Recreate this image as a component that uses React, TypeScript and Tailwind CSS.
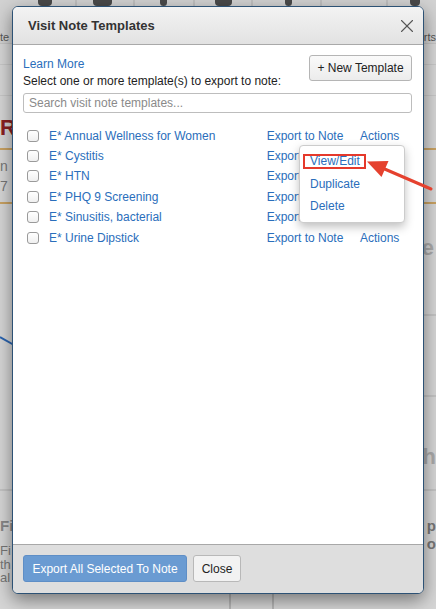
import { X } from 'lucide-react';

const templates = [
  'E* Annual Wellness for Women',
  'E* Cystitis',
  'E* HTN',
  'E* PHQ 9 Screening',
  'E* Sinusitis, bacterial',
  'E* Urine Dipstick',
];

// toolbar tabs behind the modal: cell width, icon offset, icon width
const tabs = [
  { w: 77, x: 38, iw: 14 },
  { w: 58, x: 16, iw: 19 },
  { w: 60, x: 25, iw: 7 },
  { w: 58, x: 20, iw: 17 },
  { w: 69, x: 32, iw: 7 },
  { w: 66, x: 0, iw: 0 },
  { w: 48, x: 22, iw: 10 },
];

function Backdrop() {
  return (
    <div className="flex flex-col h-full text-[#777]">
      {/* toolbar */}
      <div className="h-[44px] flex bg-[#d2d2d2] border-b border-[#c4c4c4]">
        {tabs.map((t, i) => (
          <div key={i} style={{ width: t.w }} className="flex flex-col border-r-2 border-[#c0c0c0] last:border-r-0">
            {t.iw > 0 && (
              <div
                style={{ marginLeft: t.x, width: t.iw }}
                className="h-[14px] -mt-[8px] rounded-[4px] bg-[#4a4a4a]"
              />
            )}
          </div>
        ))}
      </div>
      <div className="-mt-[13px] h-[12px] flex justify-between items-end text-[11px] leading-[12px] text-[#555]">
        <span>te</span>
        <span>rts</span>
      </div>
      <div className="h-[22px] border-b border-[#c8c8c8]" />
      <div className="h-[31px] border-b border-[#c8c8c8]" />
      <div className="h-[20px]" />
      <div className="h-[24px] flex items-center">
        <span className="text-[22px] font-bold text-[#8a2020] leading-none">R</span>
      </div>
      <div className="h-[10px] border-b-2 border-[#c9a263]" />
      <div className="h-[54px] flex flex-col justify-center text-[14px] leading-[20px] text-[#777] border-b-2 border-[#c9a263]">
        <span>n</span>
        <span>7</span>
      </div>
      <div className="h-[84px] flex justify-end items-start pt-[33px]">
        <span className="text-[22px] font-bold text-[#aaa] leading-none pr-[2px]">e</span>
      </div>
      <div className="h-[26px]" />
      <div className="h-[2px] bg-[#c4c4c4] w-[14px] self-end" />
      <div className="h-[79px]" />
      <div className="h-[2px] bg-[#c4c4c4] w-[14px] self-end" />
      <div className="h-[50px]" />
      <div className="h-[20px] flex justify-end items-center">
        <span className="text-[22px] font-bold text-[#aaa] leading-none">th</span>
      </div>
      <div className="h-[22px]" />
      <div className="h-[2px] bg-[#c4c4c4]" />
      <div className="flex-1 flex justify-between pt-[26px]">
        <div className="flex flex-col text-[13px] leading-[13.5px]">
          <span className="font-bold text-[#888] text-[15px] leading-[18px] mb-[9px]">Fi</span>
          <span>Fi</span>
          <span>th</span>
          <span>al</span>
        </div>
        <div className="flex flex-col text-[15px] font-bold text-[#777] leading-[18px]">
          <span>p</span>
          <span>o</span>
        </div>
      </div>
    </div>
  );
}

function ActionsMenu() {
  return (
    <div className="absolute left-[276px] top-[19.5px] w-[106px] bg-white border border-[#ccc] rounded-[4px] shadow-[0_4px_10px_rgba(0,0,0,0.25)] py-[4px]">
      <div className="relative h-[22.5px] flex items-center pl-[10px] text-[#2a6ebb]">
        View/Edit
        {/* annotation box */}
        <div className="absolute left-[3px] top-[3.5px] w-[63px] h-[15px] border-2 border-[#e5392b]" />
      </div>
      <div className="h-[22.5px] flex items-center pl-[10px] text-[#2a6ebb]">Duplicate</div>
      <div className="h-[22.5px] flex items-center pl-[10px] text-[#2a6ebb]">Delete</div>
    </div>
  );
}

export default function App() {
  return (
    <div className="relative w-[436px] h-[609px] overflow-hidden bg-[#d6d6d6] font-['Liberation_Sans',Arial,sans-serif] text-[12px]">
      <Backdrop />

      {/* chart strokes peeking out from behind */}
      <svg className="absolute left-0 top-0 pointer-events-none" width="436" height="609">
        <line x1="0" y1="337" x2="14" y2="345" stroke="#2a64b0" strokeWidth="2" />
        <line x1="230" y1="594" x2="230" y2="609" stroke="#b5b5b5" strokeWidth="2" />
        <line x1="273" y1="594" x2="273" y2="609" stroke="#b5b5b5" strokeWidth="2" />
      </svg>

      {/* Modal */}
      <div className="absolute left-[12px] top-[6px] w-[412px] h-[588px] flex flex-col bg-white border border-[#2d5275] rounded-[6px] overflow-hidden shadow-[0_6px_18px_rgba(0,0,0,0.45)]">
        {/* Header */}
        <div className="h-[38px] shrink-0 flex items-center justify-between pl-[15px] pr-[5px] bg-gradient-to-b from-[#f3f3f3] to-[#e2e2e2] border-b border-[#a9a9a9]">
          <h2 className="text-[13px] font-bold text-[#333]">Visit Note Templates</h2>
          <X size={22} strokeWidth={1.2} className="text-[#555]" />
        </div>

        {/* Body */}
        <div className="flex-1 pl-[10px] pr-[11px] pt-[10px]">
          <div className="flex justify-between items-start">
            <div className="leading-[16.5px] mt-[1px]">
              <a className="block text-[#2a6ebb]">Learn More</a>
              <p className="text-[#222]">Select one or more template(s) to export to note:</p>
            </div>
            <button className="h-[26px] w-[103px] rounded-[3px] border border-[#b5b5b5] bg-gradient-to-b from-[#fafafa] to-[#ececec] text-[#222] text-[12px]">
              + New Template
            </button>
          </div>
          <input
            className="mt-[4px] block w-full h-[20px] px-[5px] border border-[#bdbdbd] rounded-[3px] text-[12px] placeholder:text-[#8a8a8a] outline-none"
            placeholder="Search visit note templates..."
          />

          <div className="relative mt-[12.5px]">
            {templates.map((t) => (
              <div key={t} className="h-[20.4px] flex items-center pr-[12.7px]">
                <span className="ml-[4px] w-[12px] h-[12px] rounded-[3px] border border-[#9a9a9a] bg-gradient-to-b from-white to-[#f0f0f0] shrink-0" />
                <span className="ml-[10px] flex-1 text-[#2a6ebb]">{t}</span>
                <span className="w-[93.3px] text-[#2a6ebb]">Export to Note</span>
                <span className="text-[#2a6ebb]">Actions</span>
              </div>
            ))}
            <ActionsMenu />
          </div>
        </div>

        {/* Footer */}
        <div className="h-[49px] shrink-0 flex items-start gap-[6px] pl-[10px] pt-[10px] bg-[#dedede] border-t border-[#a8a8a8]">
          <button className="h-[27px] w-[164px] rounded-[3px] bg-[#6a9bd2] border border-[#5e8ec6] text-white text-[12px]">
            Export All Selected To Note
          </button>
          <button className="h-[27px] w-[48px] rounded-[3px] bg-[#f2f2f2] border border-[#b8b8b8] text-[#222] text-[12px]">
            Close
          </button>
        </div>
      </div>

      {/* red pointer arrow annotation */}
      <svg className="absolute left-0 top-0 pointer-events-none" width="436" height="609">
        <line x1="431" y1="189" x2="380" y2="167" stroke="#e5412e" strokeWidth="3" strokeLinecap="round" />
        <polygon points="367,161.5 388.5,161 381.5,177" fill="#e5412e" />
      </svg>
    </div>
  );
}
